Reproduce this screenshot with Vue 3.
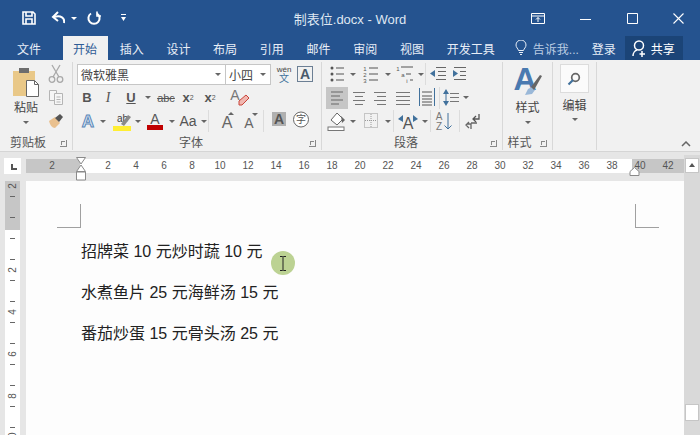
<script setup>
const tabs = ['插入', '设计', '布局', '引用', '邮件', '审阅', '视图', '开发工具'];
const rulerLabels = [2, '', 2, 4, 6, 8, 10, 12, 14, 16, 18, 20, 22, 24, 26, 28, 30, 32, 34, 36, 38, 40, 42];
const sideLabels = [2, '', 2, 4, 6, 8, 10];
const lines = ['招牌菜 10 元炒时蔬 10 元', '水煮鱼片 25 元海鲜汤 15 元', '番茄炒蛋 15 元骨头汤 25 元'];
</script>

<template>
  <div class="word">
    <header class="titlebar">
      <div class="quick">
        <svg width="14" height="14" fill="none" stroke="#fff" stroke-width="1.6"><path d="M1 1h10l2 2v10H1z" /><path d="M4 1v4h6V1M4 13V8h6v5" /></svg>
        <svg class="undo" width="14" height="14" fill="none" stroke="#fff" stroke-width="2"><path d="M13 12c1-5-3-8-10-6" /><path d="M7 1 2 6l5 4" /></svg>
        <span class="caret light small-caret"></span>
        <svg class="redo" width="14" height="14" fill="none" stroke="#fff" stroke-width="2"><path d="M4 2.500a5.600 5.600 0 1 0 6 0" /><path d="M10 .5v4.500h4" stroke-width="1.600" /></svg>
        <svg class="more" width="5" height="8" fill="#fff"><rect y="0" width="5" height="1" /><path d="M0 3h5L2.500 7z" /></svg>
      </div>
      <div class="doc-title">制表位.docx - Word</div>
      <div class="controls">
        <svg width="14" height="11" fill="none" stroke="#fff"><path d="M.5.5h13v10H.5zM.5 3h13M7 9V4.500M5 6.500l2-2 2 2" /></svg>
        <svg width="11" height="11" fill="none" stroke="#fff"><path d="M0 6.500h11" /></svg>
        <svg width="11" height="11" fill="none" stroke="#fff"><path d="M.5.5h10v10H.5z" /></svg>
        <svg width="11" height="11" fill="none" stroke="#fff" stroke-width="1.100"><path d="m.5.5 10 10M10.500.5l-10 10" /></svg>
      </div>
    </header>

    <nav class="tabbar">
      <span class="tab file">文件</span>
      <span class="tab active">开始</span>
      <span class="tab" v-for="tab in tabs" :key="tab">{{ tab }}</span>
      <span class="tell">
        <svg width="12" height="16" fill="none" stroke="#e8eef7"><path d="M3.500 10.500C3 8.500 1 7.500 1 5a5 5 0 0 1 10 0c0 2.500-2 3.500-2.500 5.500zM4 12.500h4M5 14.500h2" /></svg>
        告诉我...
      </span>
      <span class="login">登录</span>
      <span class="share">
        <svg width="14" height="17" fill="none" stroke="#fff" stroke-width="1.500"><circle cx="7" cy="5.500" r="4.500" /><path d="M1 16c0-3 2-5.500 4-6M10 11v6M7.500 14h5.500" /></svg>
        共享
      </span>
    </nav>

    <section class="ribbon">
      <div class="group clipboard">
        <div class="group-body clip-body">
          <div class="big-btn paste">
            <svg width="30" height="30">
              <rect x="2" y="4" width="22" height="25" fill="#e9c888" />
              <rect x="8" y="1" width="10" height="5" fill="#6d6d6d" />
              <path d="M15.500 13.500h8l4 4v12h-12z" fill="#fff" stroke="#666" />
              <path d="M23.500 13.500v4h4" fill="none" stroke="#666" />
            </svg>
            <span>粘贴</span>
            <span class="caret"></span>
          </div>
          <div class="small-col">
            <svg width="18" height="20" fill="none" stroke="#a9a9a9" stroke-width="1.300"><path d="m5 1 7 12M13 1 6 13" /><circle cx="5" cy="15.500" r="2.800" /><circle cx="13" cy="15.500" r="2.800" /></svg>
            <svg width="18" height="20" fill="#f6f6f6" stroke="#b5b5b5"><path d="M2.500 3.500h7v10h-7z" /><path d="M7.500 6.500h8v11h-8zM9.500 10h4M9.500 12.500h4M9.500 15h4" /></svg>
            <svg width="18" height="20"><path d="m2 11 6-4 5 6-5 5c-3 0-5-3-6-7z" fill="#e9c08e" /><path d="m8 8 5-4 3 3-4 5z" fill="#555" /></svg>
          </div>
        </div>
        <div class="group-label"><span>剪贴板</span><i class="launcher"></i></div>
      </div>

      <div class="group font">
        <div class="group-body stack">
          <div class="row">
            <div class="combo family"><span>微软雅黑</span><i class="caret"></i></div>
            <div class="combo size"><span>小四</span><i class="caret"></i></div>
            <svg class="wen" width="20" height="22"><text x="10" y="9" class="mini" fill="#444">wén</text><text x="10" y="19" class="kanji" fill="#41719c">文</text></svg>
            <span class="char-box">A</span>
          </div>
          <div class="row">
            <span class="glyph w20 bold">B</span>
            <span class="glyph w22 italic">I</span>
            <span class="glyph w24 bold under">U</span>
            <span class="caret w10"></span>
            <span class="glyph w26 strike">abc</span>
            <span class="glyph w18 bold">x<sub>2</sub></span>
            <span class="glyph w26 bold">x<sup>2</sup></span>
            <svg class="clear" width="36" height="22"><text x="12" y="13" class="letter thin" fill="#777">A</text><path d="m16 14 7-6 3 3-7 7h-3z" fill="#f1b7b0" stroke="#c9453a" /></svg>
          </div>
          <div class="row">
            <svg width="22" height="22"><text x="11" y="17" class="outline-a">A</text></svg>
            <span class="caret w8"></span>
            <svg width="26" height="22"><text x="10" y="12" class="tiny-ab" fill="#444">ab</text><path d="m14 14 7-9 3 2-7 9z" fill="#8a8a8a" /><rect x="6" y="16" width="18" height="5" fill="#ffee33" /></svg>
            <span class="caret w9"></span>
            <svg width="26" height="22"><text x="13" y="14" class="letter thin" fill="#555">A</text><rect x="5" y="15" width="16" height="5" fill="#c00000" /></svg>
            <span class="caret w7"></span>
            <span class="glyph w26 aa">Aa</span>
            <span class="caret w6"></span>
            <i class="sep tall"></i>
            <svg width="28" height="22"><text x="17" y="18" class="letter big thin" fill="#666">A</text><path d="m18 5 3-3 3 3z" fill="#666" /></svg>
            <svg width="24" height="22"><text x="11" y="18" class="letter thin" fill="#666">A</text><path d="m14 3 3 3 3-3z" fill="#666" /></svg>
            <i class="sep tall"></i>
            <svg width="24" height="22"><rect x="7" y="2" width="14" height="14" fill="#b0b0b0" /><text x="14" y="14" class="letter" fill="#555">A</text></svg>
            <svg width="24" height="22"><circle cx="12" cy="9.500" r="7.500" fill="#fff" stroke="#666" /><text x="12" y="13" class="kanji" fill="#555">字</text></svg>
          </div>
        </div>
        <div class="group-label"><span>字体</span><i class="launcher"></i></div>
      </div>

      <div class="group para">
        <div class="group-body stack">
          <div class="row">
            <svg width="22" height="22" fill="#555"><circle cx="6" cy="5" r="1.500" /><circle cx="6" cy="11" r="1.500" /><circle cx="6" cy="17" r="1.500" /><path d="M10 4.500h8v1h-8zM10 10.500h8v1h-8zM10 16.500h8v1h-8z" /></svg>
            <span class="caret w10"></span>
            <svg width="26" height="22" fill="#555"><text x="7" y="8" class="num">1</text><text x="7" y="14" class="num">2</text><text x="7" y="20" class="num">3</text><path d="M11 4.500h9v1h-9zM11 10.500h9v1h-9zM11 16.500h9v1h-9z" /></svg>
            <span class="caret w8"></span>
            <svg width="25" height="22" fill="#555"><text x="6" y="8" class="num">1</text><text x="11" y="14" class="num">a</text><text x="15" y="20" class="num">i</text><path d="M9 3.500h12v1H9zM14 10.500h5v1h-5zM18 16.500h3v1h-3z" /></svg>
            <span class="caret w7"></span>
            <i class="sep tall"></i>
            <svg width="22" height="22" fill="#666"><path d="M9 4h10v1H9zM11 8h8v1h-8zM11 12h8v1h-8zM9 16h10v1H9z" /><path d="M3 10.500 8 7v7z" fill="#41719c" /></svg>
            <svg width="22" height="22" fill="#666"><path d="M5 4h12v1H5zM11 8h6v1h-6zM11 12h6v1h-6zM5 16h12v1H5z" /><path d="M9 10.500 4 7v7z" fill="#41719c" /></svg>
          </div>
          <div class="row">
            <svg class="cur" width="22" height="22" fill="#666"><path d="M5 6h12v1H5zM5 10h9v1H5zM5 14h12v1H5zM5 18h8v1H5z" transform="translate(0 -1.500)" /></svg>
            <svg width="22" height="22" fill="#777"><path d="M5 5h12v1H5zM7 9h8v1H7zM5 13h12v1H5zM7 17h8v1H7z" /></svg>
            <svg width="20" height="22" fill="#777"><path d="M4 5h12v1H4zM7 9h9v1H7zM4 13h12v1H4zM7 17h9v1H7z" /></svg>
            <svg width="26" height="22" fill="#777"><path d="M6 5h14v1H6zM6 9h14v1H6zM6 13h14v1H6zM6 17h14v1H6z" /></svg>
            <svg width="22" height="22" fill="none" stroke="#555"><path d="M3.500 1v18M18.500 1v18" stroke="#41719c" /><path d="M6 5h10M6 9h10M6 12h10M6 15h10M6 18h10" /></svg>
            <i class="sep tall"></i>
            <svg width="20" height="22" fill="#777"><path d="M9 6h9v1H9zM9 10h9v1H9zM9 14h9v1H9z" /><path d="M5 2 2 7h6zM5 19l3-5H2z" fill="#41719c" /><path d="M4.500 6h1v9h-1z" fill="#41719c" /></svg>
            <span class="caret w10"></span>
          </div>
          <div class="row">
            <svg width="22" height="22"><path d="m5 10 6-7 6 6-6 6z" fill="#fff" stroke="#666" /><path d="m15 6 4 4-3 3z" fill="#666" /><rect x="2" y="17" width="16" height="3.500" fill="#fff" stroke="#777" /></svg>
            <span class="caret w10"></span>
            <svg width="26" height="22"><rect x="6.500" y="3.500" width="13" height="14" fill="none" stroke="#999" stroke-dasharray="1 1" /><path d="M13 4v14M7 10.500h12" stroke="#999" stroke-dasharray="1 1" /></svg>
            <span class="caret w8"></span>
            <i class="sep tall"></i>
            <svg width="26" height="22"><text x="13" y="19" class="letter big thin" fill="#555">A</text><path d="M3 9 8 5v7zM23 9l-5-4v7z" fill="#41719c" /></svg>
            <span class="caret w8"></span>
            <i class="sep tall"></i>
            <svg width="26" height="22"><text x="7" y="10" class="num big" fill="#777">A</text><text x="7" y="20" class="num big" fill="#777">Z</text><path d="M16 3v16M12.500 15.500 16 19l3.500-3.500" stroke="#41719c" fill="none" /></svg>
            <i class="sep tall"></i>
            <svg width="24" height="22" fill="none" stroke="#555" stroke-width="1.300"><path d="M18 4v5h-6M15 6l-3 3 3 3" /><path d="M9 13H15M9 19v-5H5M7 12l-3 3 3 3" transform="translate(1 0)" stroke="#666" /></svg>
          </div>
        </div>
        <div class="group-label"><span>段落</span><i class="launcher"></i></div>
      </div>

      <div class="group styles">
        <div class="group-body big-btn">
          <svg class="style-icon" width="30" height="40">
            <text x="12" y="31" class="style-a">A</text>
            <path d="m12 36 3-6 4-2 3 3-3 4z" fill="#9ab8d8" />
            <path d="m18 28 9-12 2 1-8 14z" fill="#666" />
          </svg>
          <span>样式</span>
          <span class="caret"></span>
        </div>
        <div class="group-label"><span>样式</span><i class="launcher"></i></div>
      </div>

      <div class="group edit">
        <div class="group-body big-btn">
          <span class="find">
            <svg width="14" height="14" fill="none" stroke-width="1.700"><circle cx="8.500" cy="5.500" r="3.800" stroke="#666" /><path d="m6 8-4.500 4.500" stroke="#41719c" stroke-width="2.200" /></svg>
          </span>
          <span>编辑</span>
          <span class="caret"></span>
        </div>
      </div>

      <div class="ribbon-end">
        <svg width="10" height="6" fill="none" stroke="#666" stroke-width="1.500"><path d="m1 5 4-4 4 4" /></svg>
      </div>
    </section>

    <div class="ruler-row">
      <div class="corner"><span class="stop"></span></div>
      <div class="h-ruler">
        <span class="h-num" v-for="(n, i) in rulerLabels" :key="i">{{ n }}</span>
        <svg class="indent-left" width="12" height="24" fill="#fff" stroke="#8a8a8a"><path d="M1.500.5h9L6 7zM6 8l4.500 6.500h-9zM1.500 15h9v8h-9z" /></svg>
        <svg class="indent-right" width="11" height="9" fill="#fff" stroke="#8a8a8a"><path d="M5.500.5 10 4.500v4H1v-4z" /></svg>
      </div>
      <div class="scroll-head"><span class="scroll-up"></span></div>
    </div>

    <div class="doc-row">
      <div class="v-gutter">
        <div class="v-ruler">
          <div class="v-cell" v-for="(n, i) in sideLabels" :key="i">
            <i></i>
            <span>{{ n }}</span>
            <i></i>
          </div>
        </div>
      </div>
      <main class="page">
        <div class="crops">
          <span class="crop"></span>
          <span class="crop right"></span>
        </div>
        <p v-for="line in lines" :key="line">{{ line }}</p>
        <div class="pointer">
          <svg width="8" height="15" fill="none" stroke="#222"><path d="M1 .5h2.500L4 1l.5-.5H7M4 1v13M1 14.500h2.500L4 14l.5.500H7" /></svg>
        </div>
      </main>
      <div class="scrollbar"><span class="thumb"></span></div>
    </div>
  </div>
</template>

<style>
html,
body {
  margin: 0;
  background: #e6e6e6;
}
</style>

<style scoped>
.word {
  display: flex;
  flex-direction: column;
  width: 700px;
  height: 435px;
  overflow: hidden;
  font-family: "Liberation Sans", "Noto Sans CJK SC", sans-serif;
  font-size: 12px;
  color: #444;
}

.titlebar {
  display: grid;
  grid-template-columns: 1fr auto 1fr;
  align-items: center;
  height: 36px;
  background: #25538f;
}

.quick {
  display: flex;
  align-items: center;
  padding-left: 22px;
}

.undo {
  margin-left: 15px;
}

.small-caret {
  margin-left: 6px;
}

.redo {
  margin-left: 10px;
}

.more {
  margin-left: 20px;
}

.doc-title {
  font-size: 13px;
  color: #dfe7f2;
}

.controls {
  display: flex;
  align-items: center;
  justify-content: flex-end;
  padding-right: 16px;
}

.controls svg:nth-child(2) {
  margin-left: 35px;
}

.controls svg:nth-child(3) {
  margin-left: 36px;
}

.controls svg:nth-child(4) {
  margin-left: 35px;
}

.tabbar {
  display: flex;
  align-items: stretch;
  gap: 1.7px;
  height: 24px;
  padding-left: 6.5px;
  background: #25538f;
  color: #e8eef7;
}

.tab {
  display: flex;
  align-items: center;
  padding: 0 10.5px;
}

.tab.file {
  margin-right: 9.3px;
}

.tab.active {
  background: #f1f1f1;
  color: #2f5c96;
}

.tell {
  display: flex;
  align-items: center;
  gap: 6px;
  margin-left: 8px;
  color: #bccde3;
}

.login {
  display: flex;
  align-items: center;
  margin-left: 11.300px;
}

.share {
  display: flex;
  align-items: center;
  gap: 5px;
  margin-left: 7.300px;
  padding: 0 8px 0 7px;
  background: #1b4477;
  color: #fff;
}

.ribbon {
  display: flex;
  height: 92px;
  background: #f1f1f1;
  border-bottom: 1px solid #d5d5d5;
  box-sizing: border-box;
}

.group {
  display: flex;
  flex-direction: column;
  margin: 2px 0 1px;
  border-right: 1px solid #d8d8d8;
  box-sizing: border-box;
}

.clipboard {
  width: 73px;
}

.font {
  width: 249px;
  padding-left: 4px;
}

.para {
  width: 181px;
  padding-left: 4px;
}

.styles {
  width: 50px;
}

.edit {
  width: 44px;
}

.group-body {
  flex: 1;
  min-height: 0;
}

.stack {
  display: flex;
  flex-direction: column;
  gap: 1.5px;
  padding-top: 1px;
}

.row {
  display: flex;
  align-items: center;
  height: 22px;
}

.clip-body {
  display: flex;
  padding-left: 5px;
}

.big-btn {
  display: flex;
  flex-direction: column;
  align-items: center;
}

.paste {
  width: 42px;
  padding-top: 5px;
}

.paste span:nth-child(2),
.styles .big-btn span:nth-child(2) {
  margin-top: 3px;
  line-height: 17px;
}

.big-btn .caret {
  margin-top: 4px;
}

.small-col {
  display: flex;
  flex-direction: column;
  gap: 3px;
  padding-top: 2px;
}

.group-label {
  display: flex;
  align-items: center;
  flex: none;
  height: 14px;
  color: #555;
  line-height: 14px;
}

.group-label span {
  flex: 1;
  text-align: center;
}

.launcher {
  position: relative;
  display: block;
  width: 7px;
  height: 7px;
  margin: 0 5px 0 4px;
  border-right: 1px solid #888;
  border-bottom: 1px solid #888;
  box-sizing: border-box;
}

.launcher::after {
  content: "";
  position: absolute;
  top: 1px;
  left: 1px;
  width: 3px;
  height: 3px;
  border-top: 1px solid #888;
  border-left: 1px solid #888;
}

.combo {
  display: flex;
  align-items: center;
  justify-content: space-between;
  height: 21px;
  padding: 0 4px 0 3px;
  background: #fff;
  border: 1px solid #c6c6c6;
  box-sizing: border-box;
  font-size: 12px;
}

.family {
  width: 149px;
}

.size {
  width: 46px;
  margin-left: -1px;
}

.wen {
  margin-left: 3px;
}

.mini {
  font-size: 8px;
  text-anchor: middle;
}

.kanji {
  font-size: 10px;
  text-anchor: middle;
}

.char-box {
  display: flex;
  align-items: center;
  justify-content: center;
  width: 16px;
  height: 16px;
  margin-left: 3px;
  border: 1px solid #6c7f94;
  box-sizing: border-box;
  font-size: 14px;
  font-weight: 700;
  color: #4a5a6b;
}

.caret {
  display: block;
  flex: none;
  width: 0;
  height: 0;
  border-top: 3px solid #666;
  border-right: 3px solid transparent;
  border-left: 3px solid transparent;
}

.caret.light {
  border-top-color: #fff;
}

.caret.w6 {
  margin: 0;
}

.caret.w7 {
  margin: 0 .5px;
}

.caret.w8 {
  margin: 0 1px;
}

.caret.w9 {
  margin: 0 1.5px;
}

.caret.w10 {
  margin: 0 2px;
}

.glyph {
  display: flex;
  align-items: center;
  justify-content: center;
  font-size: 13px;
  color: #555;
}

.w18 {
  width: 18px;
}

.w20 {
  width: 20px;
}

.w22 {
  width: 22px;
}

.w24 {
  width: 24px;
}

.w26 {
  width: 26px;
}

.bold {
  font-weight: 700;
}

.italic {
  font-family: "Liberation Serif", serif;
  font-style: italic;
  font-size: 14px;
}

.under {
  text-decoration: underline;
}

.strike {
  font-size: 11px;
  text-decoration: line-through;
}

.glyph sub,
.glyph sup {
  font-size: 7px;
  font-weight: 400;
  line-height: 0;
}

.aa {
  font-size: 14px;
}

.letter {
  font-size: 14px;
  font-weight: 700;
  text-anchor: middle;
}

.letter.thin {
  font-weight: 400;
}

.letter.big {
  font-size: 16px;
}

.outline-a {
  font-size: 17px;
  font-weight: 700;
  text-anchor: middle;
  fill: #dbe7f4;
  stroke: #5b87b8;
  stroke-width: 1;
}

.tiny-ab {
  font-size: 10px;
}

.num {
  font-size: 6px;
  text-anchor: middle;
}

.num.big {
  font-size: 10px;
}

.style-icon {
  margin: -5px 0 -2px;
}

.style-a {
  font-size: 32px;
  font-weight: 700;
  text-anchor: middle;
  fill: #4a7ab0;
}

.sep {
  display: block;
  flex: none;
  width: 1px;
  margin: 0 1px;
  background: #dcdcdc;
}

.sep.tall {
  height: 22px;
}

.cur {
  background: #c6c6c6;
}

.styles .big-btn {
  padding-top: 2px;
}

.edit .big-btn {
  padding-top: 2px;
}

.edit .big-btn > span:nth-child(2) {
  margin-top: 5px;
  line-height: 17px;
}

.edit .big-btn .caret {
  margin-top: 3px;
}

.find {
  display: flex;
  align-items: center;
  justify-content: center;
  width: 29px;
  height: 29px;
  margin-left: -1px;
  background: #fbfbfb;
  border: 1px solid #dcdcdc;
  box-sizing: border-box;
}

.ribbon-end {
  display: flex;
  flex: 1;
  align-items: flex-end;
  justify-content: flex-end;
  padding: 0 9px 4px 0;
}

.ruler-row {
  display: flex;
  height: 29px;
  padding-top: 6px;
  box-sizing: border-box;
  background: #e6e6e6;
}

.corner {
  display: flex;
  flex: none;
  width: 26px;
  padding-left: 4px;
  box-sizing: border-box;
}

.stop {
  display: block;
  position: relative;
  width: 17px;
  height: 16px;
  background: #fff;
}

.stop::after {
  content: "";
  position: absolute;
  top: 6px;
  left: 7px;
  width: 6px;
  height: 6px;
  border-left: 2px solid #555;
  border-bottom: 2px solid #555;
  box-sizing: border-box;
}

.h-ruler {
  position: relative;
  display: flex;
  flex: none;
  width: 658px;
  height: 14px;
  margin-top: 1px;
  padding-left: 12px;
  box-sizing: border-box;
  background: linear-gradient(to right, #c6c6c6 54px, #fff 54px, #fff 606px, #c6c6c6 606px);
}

.h-num {
  flex: none;
  width: 28px;
  font-size: 10px;
  line-height: 14px;
  text-align: center;
  color: #555;
}

.indent-left {
  position: absolute;
  top: -2px;
  left: 49px;
}

.indent-right {
  position: absolute;
  top: 8px;
  left: 603px;
}

.scroll-head {
  flex: none;
  width: 16px;
  margin-top: -3px;
  padding: 3px 1px 0;
  box-sizing: border-box;
  background: #d9d9d9;
}

.scroll-up {
  position: relative;
  display: block;
  height: 15px;
  background: #fff;
  border: 1px solid #c6c6c6;
  box-sizing: border-box;
}

.scroll-up::after {
  content: "";
  position: absolute;
  top: 4px;
  left: 3px;
  border-right: 3px solid transparent;
  border-bottom: 4px solid #555;
  border-left: 3px solid transparent;
}

.doc-row {
  display: flex;
  flex: 1;
  min-height: 0;
}

.v-gutter {
  flex: none;
  width: 26px;
  padding-left: 5px;
  box-sizing: border-box;
  overflow: hidden;
  background: #e6e6e6;
}

.v-ruler {
  width: 15px;
  height: 254px;
  overflow: hidden;
  background: linear-gradient(to bottom, #c6c6c6 49px, #fff 49px);
}

.v-cell {
  display: flex;
  flex-direction: column;
  align-items: center;
  justify-content: space-between;
  height: 42px;
  padding: 10px 0;
  box-sizing: border-box;
  font-size: 10px;
  color: #555;
}

.v-cell:first-child {
  margin-top: -16px;
}

.v-cell span {
  transform: rotate(-90deg);
  line-height: 10px;
}

.v-cell i {
  display: block;
  width: 5px;
  height: 1px;
  background: #666;
}

.page {
  position: relative;
  flex: 1;
  padding: 23px 25px 0 31px;
  background: #fdfdfd;
}

.crops {
  display: flex;
  justify-content: space-between;
  margin-bottom: 3px;
}

.crop {
  display: block;
  width: 24px;
  height: 24px;
  border-right: 1px solid #a0a0a0;
  border-bottom: 1px solid #a0a0a0;
  box-sizing: border-box;
}

.crop.right {
  border-right: 0;
  border-left: 1px solid #a0a0a0;
}

.page p {
  margin: 0;
  padding-left: 24px;
  font-size: 16px;
  line-height: 41px;
  color: #222;
}

.pointer {
  position: absolute;
  top: 70px;
  left: 245px;
  display: flex;
  align-items: center;
  justify-content: center;
  width: 24px;
  height: 24px;
  background: #bcd293;
  border-radius: 50%;
}

.scrollbar {
  flex: none;
  width: 16px;
  padding: 223px 1px 0;
  box-sizing: border-box;
  background: #d9d9d9;
}

.thumb {
  display: block;
  height: 17px;
  background: #fff;
  border: 1px solid #c6c6c6;
  box-sizing: border-box;
}
</style>
